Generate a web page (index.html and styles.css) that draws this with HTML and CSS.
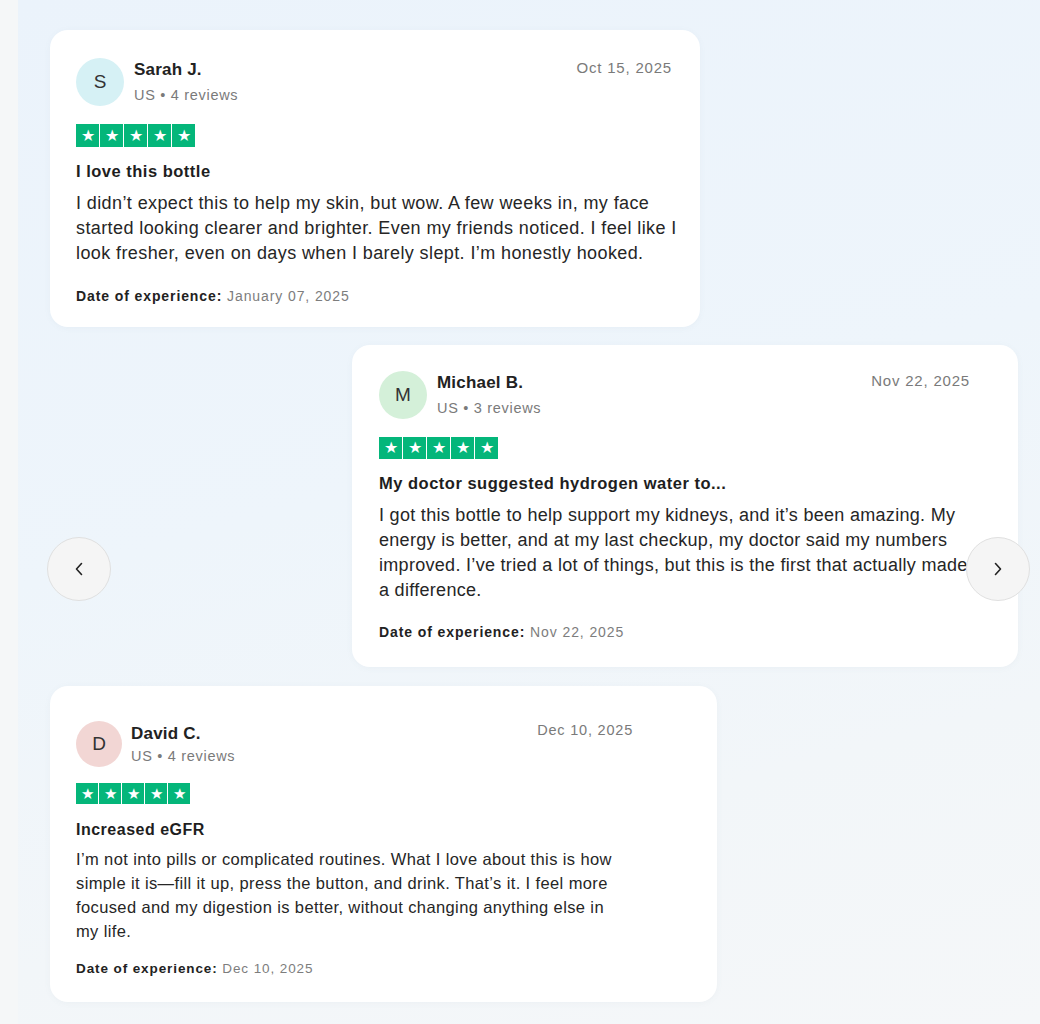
FILE: index.html
```html
<!DOCTYPE html>
<html lang="en">
<head>
<meta charset="utf-8">
<title>Reviews</title>
<link rel="stylesheet" href="styles.css">
</head>
<body>
<main class="stage">
  <section class="reviews">
    <article class="card card--a">
      <header class="head">
        <div class="avatar avatar--cyan">S</div>
        <div class="who">
          <div class="name">Sarah J.</div>
          <div class="meta">US • 4 reviews</div>
        </div>
        <div class="when">Oct 15, 2025</div>
      </header>
      <div class="stars"><span class="star">★</span><span class="star">★</span><span class="star">★</span><span class="star">★</span><span class="star">★</span></div>
      <h3 class="title">I love this bottle</h3>
      <p class="body">I didn’t expect this to help my skin, but wow. A few weeks in, my face started looking clearer and brighter. Even my friends noticed. I feel like I look fresher, even on days when I barely slept. I’m honestly hooked.</p>
      <p class="exp"><b>Date of experience:</b> January 07, 2025</p>
    </article>

    <article class="card card--b">
      <header class="head">
        <div class="avatar avatar--green">M</div>
        <div class="who">
          <div class="name">Michael B.</div>
          <div class="meta">US • 3 reviews</div>
        </div>
        <div class="when">Nov 22, 2025</div>
      </header>
      <div class="stars"><span class="star">★</span><span class="star">★</span><span class="star">★</span><span class="star">★</span><span class="star">★</span></div>
      <h3 class="title">My doctor suggested hydrogen water to...</h3>
      <p class="body">I got this bottle to help support my kidneys, and it’s been amazing. My energy is better, and at my last checkup, my doctor said my numbers improved. I’ve tried a lot of things, but this is the first that actually made a difference.</p>
      <p class="exp"><b>Date of experience:</b> Nov 22, 2025</p>
    </article>

    <article class="card card--c">
      <header class="head">
        <div class="avatar avatar--pink">D</div>
        <div class="who">
          <div class="name">David C.</div>
          <div class="meta">US • 4 reviews</div>
        </div>
        <div class="when">Dec 10, 2025</div>
      </header>
      <div class="stars"><span class="star">★</span><span class="star">★</span><span class="star">★</span><span class="star">★</span><span class="star">★</span></div>
      <h3 class="title">Increased eGFR</h3>
      <p class="body">I’m not into pills or complicated routines. What I love about this is how simple it is—fill it up, press the button, and drink. That’s it. I feel more focused and my digestion is better, without changing anything else in my life.</p>
      <p class="exp"><b>Date of experience:</b> Dec 10, 2025</p>
    </article>
  </section>

  <button class="nav nav--prev" aria-label="Previous">
    <svg width="12" height="18" viewBox="0 0 12 18"><polyline points="8.5,3.5 3.5,9 8.5,14.5" fill="none" stroke="#222" stroke-width="1.6" stroke-linecap="round" stroke-linejoin="round"/></svg>
  </button>
  <button class="nav nav--next" aria-label="Next">
    <svg width="12" height="18" viewBox="0 0 12 18"><polyline points="3.5,3.5 8.5,9 3.5,14.5" fill="none" stroke="#222" stroke-width="1.6" stroke-linecap="round" stroke-linejoin="round"/></svg>
  </button>
</main>
</body>
</html>
```
FILE: styles.css
```css
* { box-sizing: border-box; }
html, body { margin: 0; padding: 0; }
body {
  background: #f5f7f8;
  font-family: "Liberation Sans", Arial, sans-serif;
  color: #1f1f1f;
}
.stage {
  position: relative;
  margin-left: 18px;
  min-height: 1024px;
  background: linear-gradient(165deg, #ebf3fb 0%, #eef5fb 45%, #f2f6f9 75%, #f5f7f9 100%);
  padding-top: 30px;
  padding-bottom: 24px;
}
.reviews {
  display: flex;
  flex-direction: column;
  gap: 18px;
}
.card {
  background: #fff;
  border-radius: 18px;
  box-shadow: 0 1px 6px rgba(120, 140, 160, 0.06);
}
.card--a { margin-left: 32px; width: 650px; padding: 28px 14px 22px 26px; }
.card--a .when { margin-right: 14px; }
.card--b { margin-left: 334px; width: 666px; padding: 26px 36px 26px 27px; }
.card--b .when { margin-right: 12px; }
.card--c { margin-left: 32px; width: 667px; padding: 35px 84px 24px 26px; margin-top: 1px; }

.head {
  display: flex;
  align-items: flex-start;
}
.avatar {
  width: 48px; height: 48px;
  border-radius: 50%;
  display: flex; align-items: center; justify-content: center;
  font-size: 19px;
  color: #333;
  flex: none;
}
.avatar--cyan { background: #d6f1f5; }
.avatar--green { background: #d4f0d9; }
.avatar--pink { background: #f2d6d4; width: 46px; height: 46px; }
.who { margin-left: 10px; flex: 1; }
.card--c .who { margin-left: 9px; }
.name {
  font-size: 17px;
  font-weight: 700;
  line-height: 20px;
  margin-top: 2px;
  color: #222;
  letter-spacing: 0.2px;
}
.card--c .name { margin-top: 3px; }
.meta {
  font-size: 14.5px;
  color: #7a7a7a;
  line-height: 18px;
  margin-top: 6px;
  letter-spacing: 0.7px;
}
.card--c .meta { margin-top: 3px; }
.when {
  font-size: 15px;
  color: #7a7a7a;
  line-height: 18px;
  margin-top: 1px;
  letter-spacing: 0.8px;
}
.card--c .when { margin-top: 0; font-size: 14.5px; }

.stars {
  display: flex;
  gap: 1px;
  margin-top: 18px;
}
.star {
  width: 23px; height: 23px;
  background: #04b67a;
  color: #fff;
  font-size: 16px;
  line-height: 23px;
  text-align: center;
}
.card--b .stars { margin-top: 18px; }
.card--b .star { height: 22px; line-height: 22px; }
.card--c .stars { margin-top: 16px; }
.card--c .star { width: 22px; height: 21px; line-height: 21px; font-size: 15px; }

.title {
  margin: 14px 0 0;
  font-size: 16.5px;
  font-weight: 700;
  line-height: 20px;
  color: #1e1e1e;
  letter-spacing: 0.5px;
}
.card--c .title { margin-top: 16px; font-size: 16px; }

.body {
  margin: 10px 0 0;
  font-size: 18px;
  line-height: 25px;
  color: #262626;
  letter-spacing: 0.4px;
}
.card--b .body { letter-spacing: 0.3px; }
.card--c .body { font-size: 16.5px; line-height: 24px; margin-top: 7px; letter-spacing: 0.38px; max-width: 546px; }

.exp {
  margin: 21px 0 0;
  font-size: 14px;
  line-height: 18px;
  color: #7d7d7d;
  letter-spacing: 0.9px;
}
.exp b { color: #222; letter-spacing: 0.9px; }
.card--b .exp { margin-top: 20px; }
.card--c .exp { margin-top: 17px; font-size: 13.5px; }

.nav {
  position: absolute;
  top: 537px;
  width: 64px; height: 64px;
  border-radius: 50%;
  background: #f5f5f5;
  border: 1px solid #e0e0e0;
  display: flex; align-items: center; justify-content: center;
  padding: 0;
  cursor: pointer;
}
.nav--prev { left: 29px; }
.nav--next { left: 948px; }
```
